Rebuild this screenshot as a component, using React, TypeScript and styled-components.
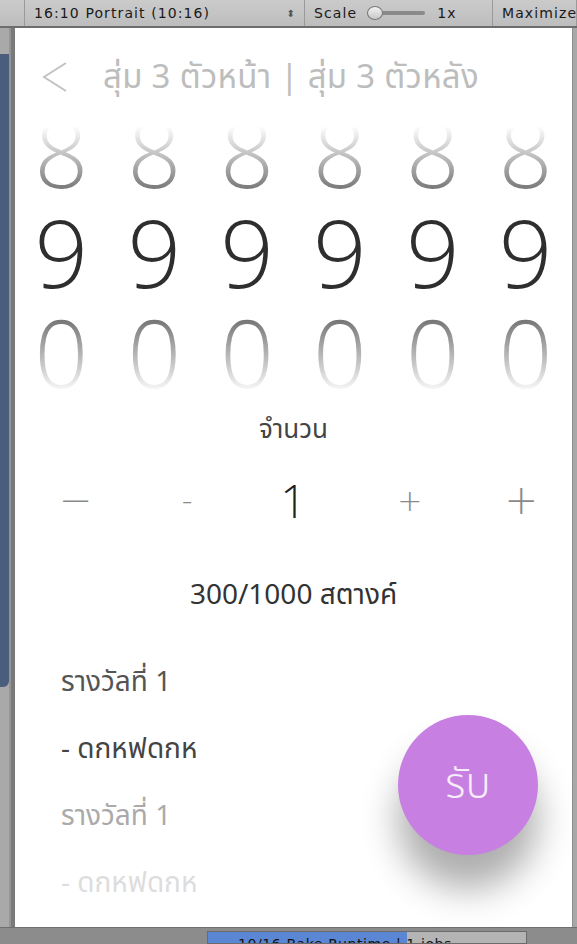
import React from 'react';
import styled, { createGlobalStyle } from 'styled-components';

const GlobalStyle = createGlobalStyle`
  html, body {
    margin: 0;
    padding: 0;
    background: #8c8c8c;
    overflow: hidden;
  }
  * {
    box-sizing: border-box;
  }
`;

const THAI = `"Noto Sans", "Noto Sans Thai", "Open Sans", sans-serif`;

const Editor = styled.div`
  width: 577px;
  height: 944px;
  display: grid;
  grid-template-rows: 28px 1fr 17px;
  grid-template-columns: 15px 1fr 5px;
  background: #8c8c8c;
  font-family: "DejaVu Sans", sans-serif;
`;

const Toolbar = styled.div`
  grid-column: 1 / 4;
  display: flex;
  align-items: stretch;
  background: linear-gradient(#cbcbcb, #bdbdbd);
  border-bottom: 2px solid #6d6d6d;
  font-size: 14px;
  letter-spacing: 1.1px;
  color: #1a1a1a;
`;

const ToolCell = styled.div<{ w?: number; grow?: boolean }>`
  display: flex;
  align-items: center;
  gap: 8px;
  padding: 0 8px 0 9px;
  border-right: 1px solid #9a9a9a;
  ${p => (p.w ? `width: ${p.w}px; flex: none;` : '')}
  ${p => (p.grow ? 'flex: 1;' : '')}
  white-space: nowrap;
  overflow: hidden;
`;

const Spinner = styled.span`
  margin-left: auto;
  font-size: 10px;
  color: #555;
`;

const Slider = styled.div`
  position: relative;
  width: 58px;
  height: 14px;
  margin-left: 2px;
  display: flex;
  align-items: center;
  &::before {
    content: '';
    flex: 1;
    height: 4px;
    border-radius: 2px;
    background: #8a8a8a;
  }
`;

const Knob = styled.span`
  position: absolute;
  left: 0;
  top: 0;
  width: 16px;
  height: 14px;
  border-radius: 50%;
  background: linear-gradient(#f2f2f2, #c8c8c8);
  border: 1px solid #7a7a7a;
`;

const SideRail = styled.div`
  display: flex;
  background: #7a7a7a;
  padding-right: 4px;
`;

const SideInner = styled.div`
  flex: 1;
  background: #a9a9a9;
  padding-top: 26px;
  padding-bottom: 240px;
  border-right: 2px solid #959595;
`;

const SidePanel = styled.div`
  height: 100%;
  background: #4b5d7c;
  border-radius: 0 0 6px 0;
`;

const RightRail = styled.div`
  background: #a8a8a8;
  border-left: 1px solid #8e8e8e;
`;

const GameView = styled.div`
  position: relative;
  background: #ffffff;
  overflow: hidden;
  font-family: ${THAI};
`;

const Header = styled.div`
  display: flex;
  align-items: center;
  height: 98px;
  padding: 0 0 0 26px;
  gap: 34px;
  color: #bdbdbd;
`;

const Title = styled.div`
  font-size: 33px;
  letter-spacing: 0.3px;
  white-space: nowrap;
  margin-top: 2px;
`;

const Wheel = styled.div`
  display: grid;
  grid-template-columns: repeat(6, 1fr);
  height: 268px;
  overflow: hidden;
  -webkit-mask-image: linear-gradient(to bottom, rgba(0,0,0,0) 0%, #000 26%, #000 70%, rgba(0,0,0,0) 100%);
  mask-image: linear-gradient(to bottom, rgba(0,0,0,0) 0%, #000 26%, #000 70%, rgba(0,0,0,0) 100%);
`;

const WheelColumn = styled.div`
  display: flex;
  flex-direction: column;
  align-items: center;
  margin-top: -24px;
`;

const Digit = styled.div<{ current?: boolean }>`
  font-family: "Open Sans", sans-serif;
  font-weight: 300;
  font-size: 94px;
  line-height: 100px;
  height: 100px;
  color: ${p => (p.current ? '#2e2e2e' : '#6a6a6a')};
`;

const AmountLabel = styled.div`
  text-align: center;
  font-size: 26px;
  color: #444;
  margin-top: 16px;
`;

const Stepper = styled.div`
  display: grid;
  grid-template-columns: repeat(5, 1fr);
  align-items: center;
  height: 72px;
  margin-top: 14px;
`;

const StepButton = styled.div<{ small?: boolean }>`
  text-align: center;
  font-family: "DejaVu Sans", sans-serif;
  font-weight: 200;
  font-size: ${p => (p.small ? '30px' : '40px')};
  color: #8a8a8a;
  padding-left: 10px;
`;

const Count = styled.div`
  text-align: center;
  font-family: "Open Sans", sans-serif;
  font-weight: 300;
  font-size: 46px;
  color: #222;
`;

const Credit = styled.div`
  text-align: center;
  font-size: 28px;
  color: #333;
  margin-top: 38px;
`;

const PrizeList = styled.div`
  display: flex;
  flex-direction: column;
  padding: 30px 0 0 46px;
`;

const PrizeLine = styled.div<{ shade: string }>`
  font-size: 28px;
  line-height: 67px;
  color: ${p => p.shade};
`;

const Fab = styled.div`
  position: absolute;
  left: 383px;
  top: 687px;
  width: 140px;
  height: 140px;
  border-radius: 50%;
  background: #c77fe2;
  color: #f6ecfa;
  display: flex;
  align-items: center;
  justify-content: center;
  font-size: 42px;
  font-weight: 300;
  box-shadow: 0 34px 36px rgba(0, 0, 0, 0.32);
`;

const StatusBar = styled.div`
  grid-column: 1 / 4;
  background: #8c8c8c;
  border-top: 1px solid #6f6f6f;
  padding: 3px 0 0 207px;
`;

const Progress = styled.div`
  position: relative;
  width: 320px;
  height: 13px;
  background: #b4b4b4;
  border: 1px solid #6b6b6b;
  overflow: hidden;
`;

const ProgressFill = styled.div`
  height: 100%;
  background: #5b86d4;
`;

const ProgressText = styled.span`
  position: absolute;
  left: 30px;
  top: 4px;
  font-size: 14px;
  letter-spacing: 0.6px;
  color: #111;
  white-space: nowrap;
`;

const digits = [0, 1, 2, 3, 4, 5];

export default function App() {
  return (
    <>
      <GlobalStyle />
      <Editor>
        <Toolbar>
          <ToolCell w={25} />
          <ToolCell w={280}>
            16:10 Portrait (10:16)
            <Spinner>⬍</Spinner>
          </ToolCell>
          <ToolCell w={188}>
            Scale
            <Slider>
              <Knob />
            </Slider>
            <span style={{ marginLeft: 4 }}>1x</span>
          </ToolCell>
          <ToolCell grow>Maximize on Play</ToolCell>
        </Toolbar>

        <SideRail>
          <SideInner>
            <SidePanel />
          </SideInner>
        </SideRail>

        <GameView>
          <Header>
            <svg width="28" height="32" viewBox="0 0 28 32">
              <path d="M25 2 L3 16 L25 30" fill="none" stroke="#c2c2c2" strokeWidth="2" />
            </svg>
            <Title>สุ่ม 3 ตัวหน้า | สุ่ม 3 ตัวหลัง</Title>
          </Header>

          <Wheel>
            {digits.map(i => (
              <WheelColumn key={i}>
                <Digit>8</Digit>
                <Digit current>9</Digit>
                <Digit>0</Digit>
              </WheelColumn>
            ))}
          </Wheel>

          <AmountLabel>จำนวน</AmountLabel>
          <Stepper>
            <StepButton>−</StepButton>
            <StepButton small>-</StepButton>
            <Count>1</Count>
            <StepButton small>+</StepButton>
            <StepButton>+</StepButton>
          </Stepper>
          <Credit>300/1000 สตางค์</Credit>

          <PrizeList>
            <PrizeLine shade="#555">รางวัลที่ 1</PrizeLine>
            <PrizeLine shade="#444">- ดกหฟดกห</PrizeLine>
            <PrizeLine shade="#aaa">รางวัลที่ 1</PrizeLine>
            <PrizeLine shade="#ddd">- ดกหฟดกห</PrizeLine>
          </PrizeList>

          <Fab>รับ</Fab>
        </GameView>

        <RightRail />

        <StatusBar>
          <Progress>
            <ProgressFill style={{ width: `${(10 / 16) * 100}%` }} />
            <ProgressText>10/16 Bake Runtime | 1 jobs</ProgressText>
          </Progress>
        </StatusBar>
      </Editor>
    </>
  );
}
